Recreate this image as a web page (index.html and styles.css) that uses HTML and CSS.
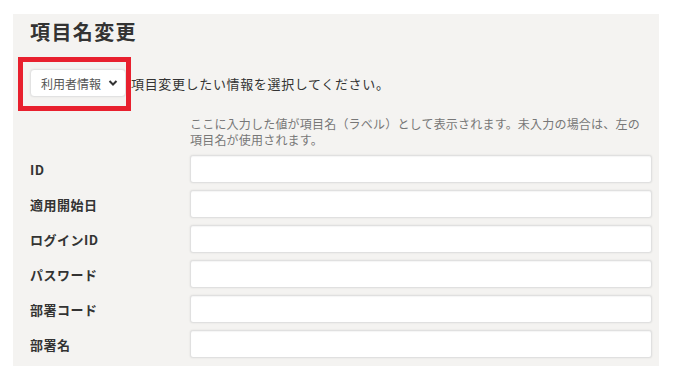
FILE: index.html
```html
<!DOCTYPE html>
<html lang="ja">
<head>
    <meta charset="UTF-8">
    <meta name="viewport" content="width=device-width, initial-scale=1.0">
    <title>項目名変更</title>
    <link rel="stylesheet" href="styles.css">
</head>
<body>
    <div class="panel">
        <h1>項目名変更</h1>

        <div class="select-row">
            <div class="select-wrap">
                <select id="target">
                    <option>利用者情報</option>
                </select>
                <svg class="chevron" width="10" height="8" viewBox="0 0 10 8">
                    <path d="M1.5 2 L5 5.5 L8.5 2" fill="none" stroke="#333" stroke-width="2"/>
                </svg>
                <div class="highlight"></div>
            </div>
            <span class="select-text">項目変更したい情報を選択してください。</span>
        </div>

        <div class="fields">
            <div></div>
            <p class="note">ここに入力した値が項目名（ラベル）として表示されます。未入力の場合は、左の項目名が使用されます。</p>

            <label for="f-id">ID</label>
            <input type="text" id="f-id">

            <label for="f-start">適用開始日</label>
            <input type="text" id="f-start">

            <label for="f-login">ログインID</label>
            <input type="text" id="f-login">

            <label for="f-pass">パスワード</label>
            <input type="text" id="f-pass">

            <label for="f-dept">部署コード</label>
            <input type="text" id="f-dept">

            <label for="f-deptname">部署名</label>
            <input type="text" id="f-deptname">
        </div>
    </div>
</body>
</html>
```

FILE: styles.css
```css
body {
    margin: 0;
    background-color: #fff;
    font-family: "Noto Sans CJK JP", "Noto Sans", sans-serif;
    color: #333;
}
.panel {
    box-sizing: border-box;
    width: 646px;
    height: 352px;
    margin: 14px 0 0 13px;
    padding: 4px 7px 0 17px;
    background-color: #f4f3f1;
}
h1 {
    margin: 0;
    font-size: 20px;
    line-height: 28px;
    font-weight: bold;
    letter-spacing: 1.4px;
    color: #333;
}
.select-row {
    display: flex;
    align-items: center;
    margin-top: 23px;
}
.select-wrap {
    position: relative;
    width: 96px;
    height: 28px;
}
.select-wrap select {
    -webkit-appearance: none;
    appearance: none;
    box-sizing: border-box;
    width: 100%;
    height: 28px;
    padding: 0 0 0 10px;
    border: 1px solid #e2e2e2;
    border-radius: 4px;
    background-color: #fff;
    box-shadow: 0 0 2px rgba(0,0,0,0.08);
    font-family: inherit;
    font-size: 12px;
    color: #555;
}
.chevron {
    position: absolute;
    right: 8px;
    top: 10px;
    pointer-events: none;
}
.highlight {
    position: absolute;
    left: -12px;
    top: -12px;
    width: 113px;
    height: 54px;
    box-sizing: border-box;
    border: 5px solid #e8202e;
    pointer-events: none;
}
.select-text {
    margin-left: 5px;
    font-size: 13px;
    letter-spacing: 0.65px;
}
.fields {
    display: grid;
    grid-template-columns: 160px 1fr;
    row-gap: 7px;
    align-items: center;
    margin-top: 19px;
}
.note {
    margin: 0;
    font-size: 12px;
    line-height: 16px;
    letter-spacing: 0.2px;
    color: #777;
}
.fields label {
    font-size: 13px;
    font-weight: bold;
    letter-spacing: 0.5px;
}
.fields input {
    box-sizing: border-box;
    width: 100%;
    height: 28px;
    border: 1px solid #e0e0e0;
    border-radius: 3px;
    background-color: #fff;
    box-shadow: 0 0 2px rgba(0,0,0,0.1), inset 0 1px 1px rgba(0,0,0,0.04);
}
```
